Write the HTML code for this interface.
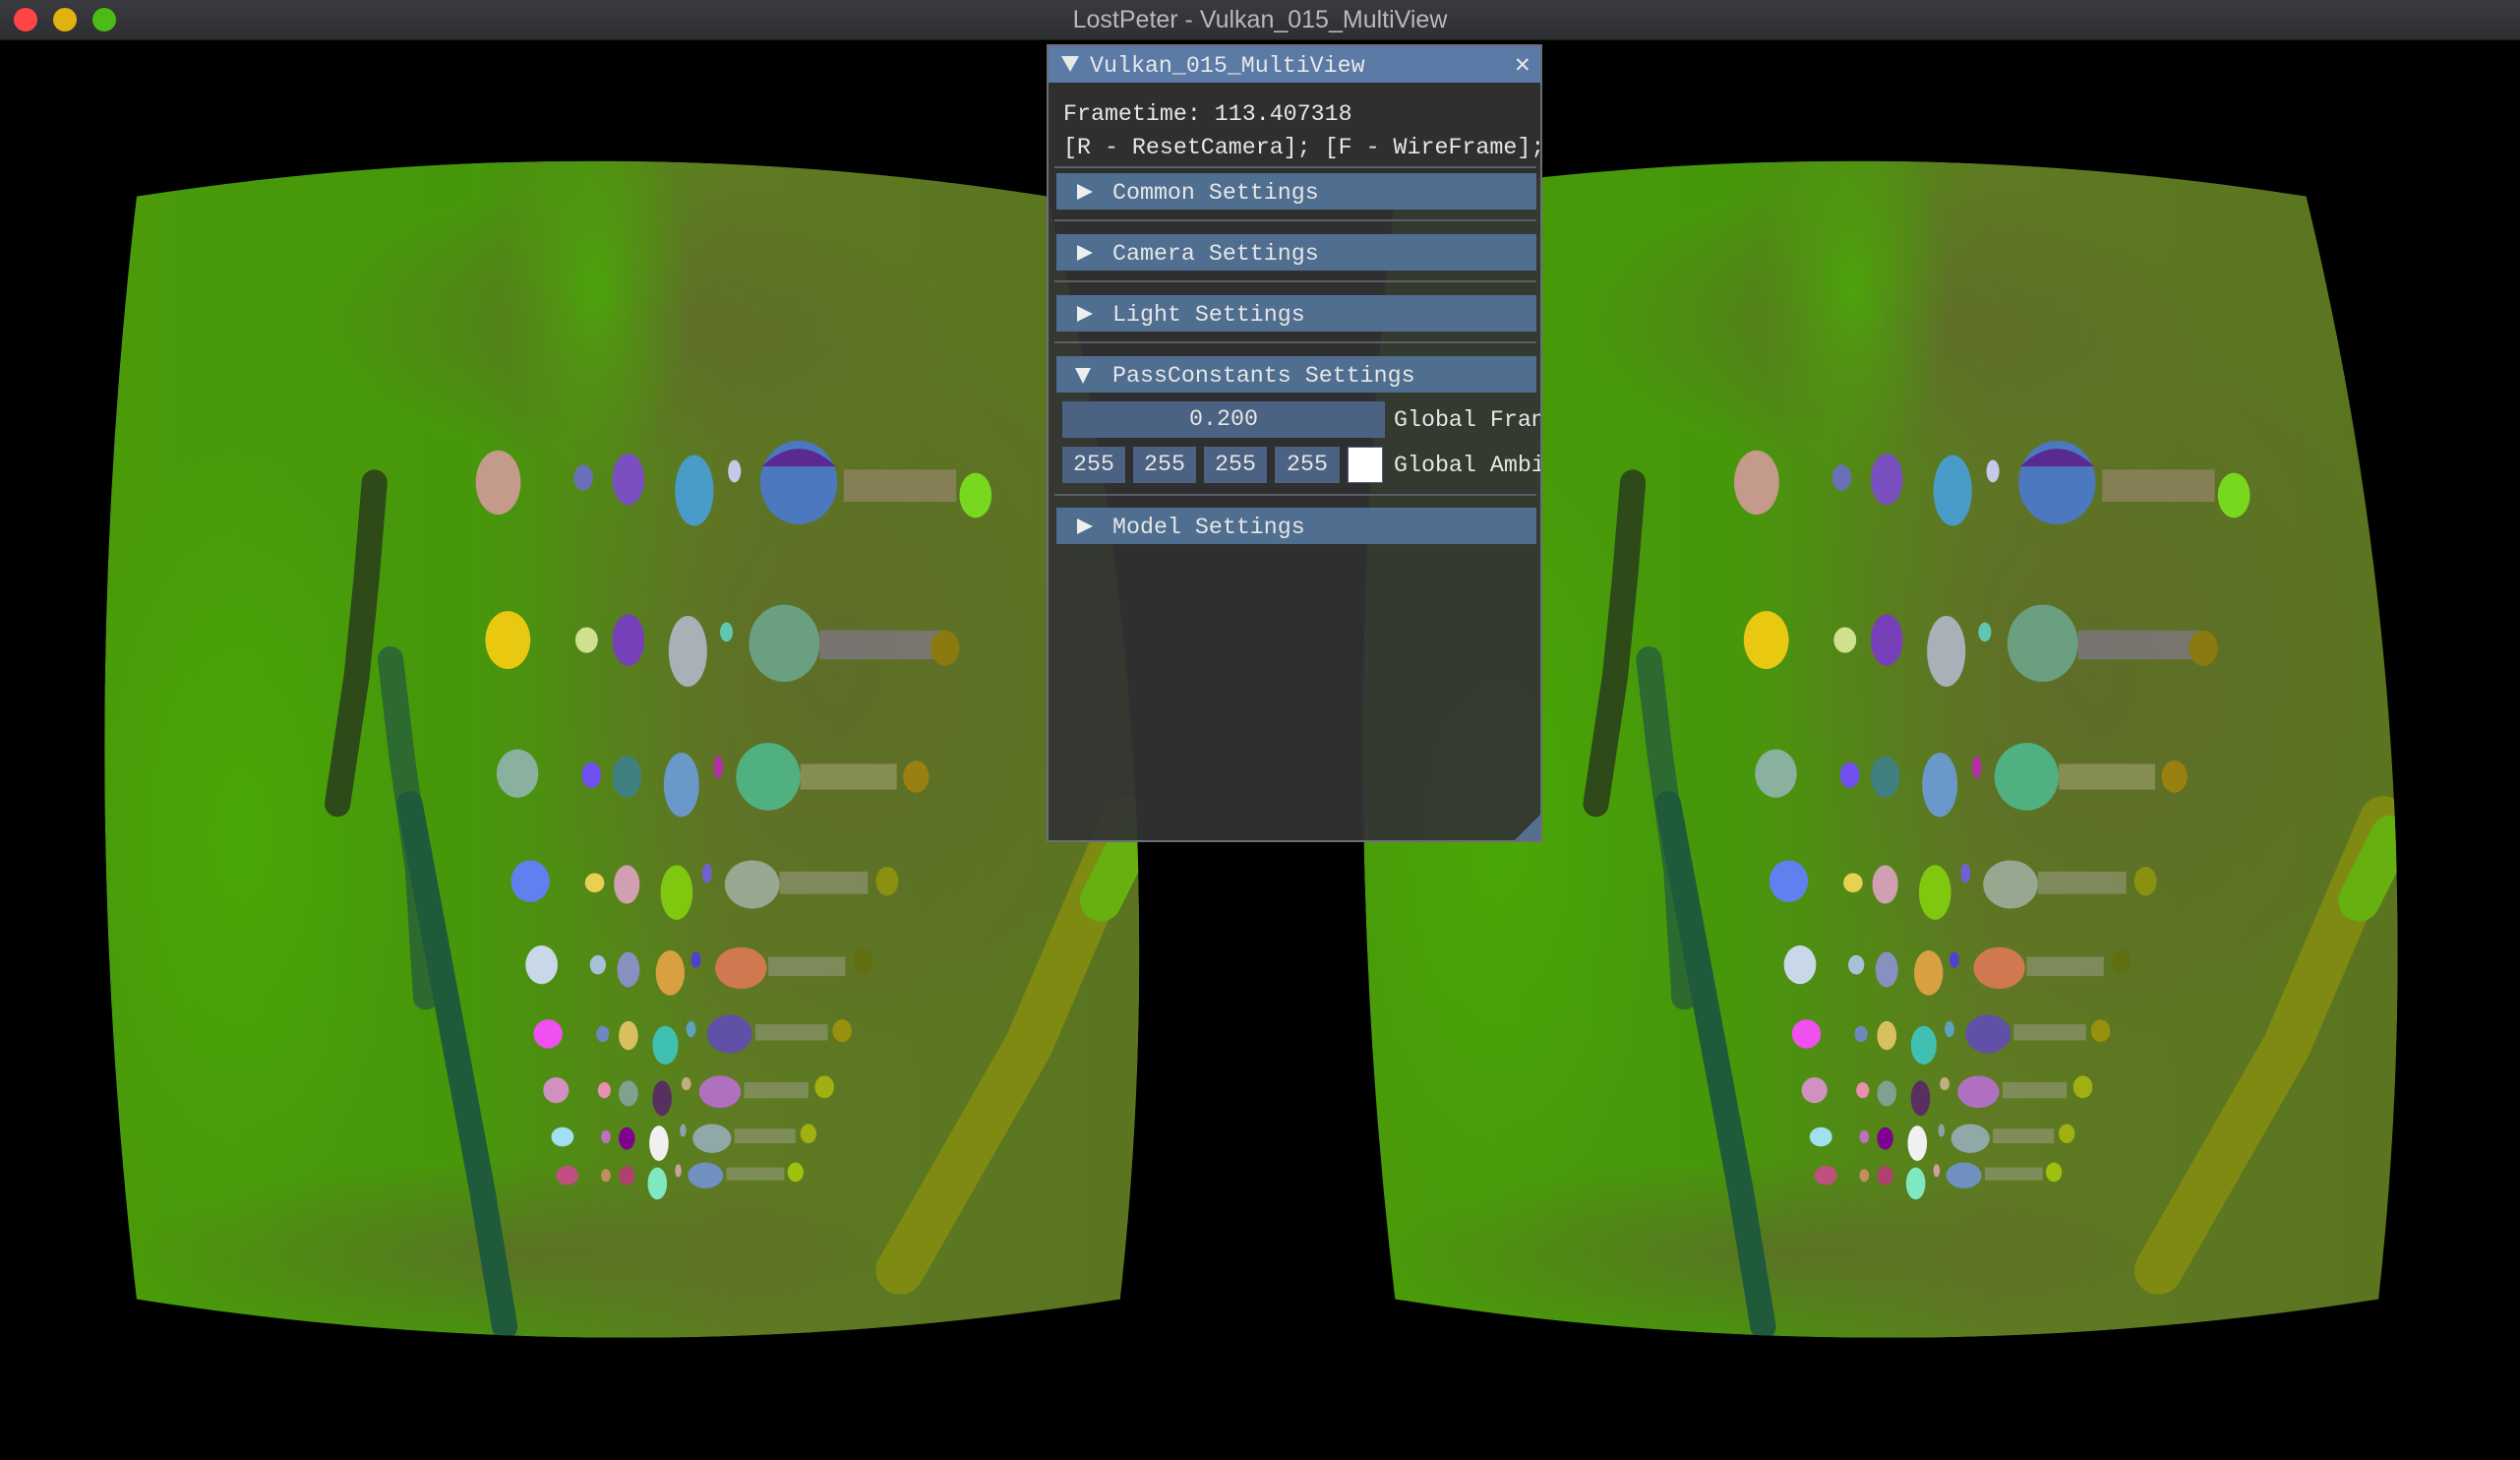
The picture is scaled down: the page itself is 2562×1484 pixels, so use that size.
<!DOCTYPE html>
<html><head><meta charset="utf-8"><style>
html,body{margin:0;padding:0;background:#000;width:2562px;height:1484px;overflow:hidden;position:relative;font-family:"Liberation Mono",monospace}
#tb{position:absolute;left:0;top:0;width:2562px;height:40px;background:linear-gradient(#3a3b3e,#2e2f32);border-bottom:1px solid #1a1a1a}
#tb .t{position:absolute;left:0;right:0;top:6px;text-align:center;color:#b9b9bb;font:25px "Liberation Sans",sans-serif}
.dot{position:absolute;top:8px;width:24px;height:24px;border-radius:50%}
#scene{position:absolute;left:0;top:41px}
#panel{position:absolute;left:1064px;top:45px;width:504px;height:811px;background:rgba(51,51,51,0.93);border:2px solid #6c6e7a;box-sizing:border-box;color:#e6e6e6;font-size:23.3px;overflow:hidden}
#ttl{position:absolute;left:0;top:0;right:0;height:37px;background:#5b7aa6}
.txt{position:absolute;white-space:pre;line-height:24px}
.hdr{position:absolute;left:8px;width:488px;height:37px;background:#4f6e90}
.sep{position:absolute;left:6px;width:490px;height:2px;background:#5c5e64}
.tri{position:absolute;width:0;height:0}
.box{position:absolute;height:37px;background:#4b6282;text-align:center;line-height:37px}
</style></head><body>
<div id="tb"><div class="dot" style="left:14px;background:#fe4447"></div><div class="dot" style="left:54px;background:#dfb20f"></div><div class="dot" style="left:94px;background:#4dbb15"></div><div class="t">LostPeter - Vulkan_015_MultiView</div></div>

<svg id="scene" width="2562" height="1443" viewBox="0 25 1568 883" preserveAspectRatio="none">
<defs>
<linearGradient id="g" x1="0" y1="0" x2="1" y2="0">
<stop offset="0" stop-color="#4a9a0a"/><stop offset="0.35" stop-color="#46980a"/><stop offset="0.6" stop-color="#5e7a22"/><stop offset="1" stop-color="#5a7420"/></linearGradient>
<radialGradient id="d" cx="0.5" cy="0.5" r="0.5"><stop offset="0" stop-color="#5f6a2a" stop-opacity="0.8"/><stop offset="1" stop-color="#5f6a2a" stop-opacity="0"/></radialGradient>
<radialGradient id="b" cx="0.5" cy="0.5" r="0.5"><stop offset="0" stop-color="#4aa808" stop-opacity="0.9"/><stop offset="1" stop-color="#4aa808" stop-opacity="0"/></radialGradient>
<clipPath id="cp"><path d="M85,122 Q370,78 652,122 Q735,465 697,808 Q390,856 85,808 Q45,465 85,122Z"/></clipPath>
<g id="v">
<g clip-path="url(#cp)">
<path d="M85,122 Q370,78 652,122 Q735,465 697,808 Q390,856 85,808 Q45,465 85,122Z" fill="url(#g)"/>
<ellipse cx="520" cy="420" rx="190" ry="260" fill="url(#d)"/>
<ellipse cx="400" cy="200" rx="200" ry="90" fill="url(#d)"/>
<ellipse cx="330" cy="780" rx="250" ry="60" fill="url(#d)"/>
<ellipse cx="150" cy="520" rx="110" ry="260" fill="url(#b)"/>
<ellipse cx="370" cy="180" rx="60" ry="120" fill="url(#b)"/>
<g stroke-linecap="round" fill="none">
<path d="M233,300 L228,360 L222,420 L210,500" stroke="#2e4a18" stroke-width="16"/>
<path d="M243,410 L250,470 L260,540 L265,620" stroke="#2c6a30" stroke-width="16"/>
<path d="M255,500 L270,580 L285,660 L300,740 L314,825" stroke="#1f5a3a" stroke-width="16"/>
<path d="M700,510 L670,580 L640,650 L600,720 L560,790" stroke="#7f8a12" stroke-width="30"/>
<path d="M705,520 L685,560" stroke="#66b010" stroke-width="26"/>
</g>
</g>
<g>
<ellipse cx="310" cy="300" rx="14" ry="20" fill="#c49a8a"/><ellipse cx="363" cy="297" rx="6" ry="8" fill="#6a70b8"/><ellipse cx="391" cy="298" rx="10" ry="16" fill="#7a50c0"/><ellipse cx="432" cy="305" rx="12" ry="22" fill="#4a9cc8"/><ellipse cx="457" cy="293" rx="4" ry="7" fill="#c8c8e8"/><ellipse cx="497" cy="300" rx="24" ry="26" fill="#4c78c0"/><path d="M474,290 Q497,268 520,290Z" fill="#5a2a90"/><rect x="525" y="292" width="70" height="20" fill="#a08878" opacity="0.6"/><ellipse cx="607" cy="308" rx="10" ry="14" fill="#78d820"/>
<ellipse cx="316" cy="398" rx="14" ry="18" fill="#e8c810"/><ellipse cx="365" cy="398" rx="7" ry="8" fill="#d0e090"/><ellipse cx="391" cy="398" rx="10" ry="16" fill="#7840b8"/><ellipse cx="428" cy="405" rx="12" ry="22" fill="#a8b0b8"/><ellipse cx="452" cy="393" rx="4" ry="6" fill="#60c8b0"/><ellipse cx="488" cy="400" rx="22" ry="24" fill="#6aa080"/><rect x="510" y="392" width="75" height="18" fill="#8a7aa0" opacity="0.6"/><ellipse cx="588" cy="403" rx="9" ry="11" fill="#8a7a10"/>
<ellipse cx="322" cy="481" rx="13" ry="15" fill="#8ab0a0"/><ellipse cx="368" cy="482" rx="6" ry="8" fill="#7050f0"/><ellipse cx="390" cy="483" rx="9" ry="13" fill="#408080"/><ellipse cx="424" cy="488" rx="11" ry="20" fill="#6a98c8"/><ellipse cx="447" cy="477" rx="3" ry="7" fill="#b030a0"/><ellipse cx="478" cy="483" rx="20" ry="21" fill="#50b080"/><rect x="498" y="475" width="60" height="16" fill="#a0a070" opacity="0.6"/><ellipse cx="570" cy="483" rx="8" ry="10" fill="#9a8010"/>
<ellipse cx="330" cy="548" rx="12" ry="13" fill="#6080f0"/><ellipse cx="370" cy="549" rx="6" ry="6" fill="#e8d050"/><ellipse cx="390" cy="550" rx="8" ry="12" fill="#d0a0b0"/><ellipse cx="421" cy="555" rx="10" ry="17" fill="#80c810"/><ellipse cx="440" cy="543" rx="3" ry="6" fill="#7060d0"/><ellipse cx="468" cy="550" rx="17" ry="15" fill="#98a890"/><rect x="485" y="542" width="55" height="14" fill="#a0a090" opacity="0.5"/><ellipse cx="552" cy="548" rx="7" ry="9" fill="#8a9010"/>
<ellipse cx="337" cy="600" rx="10" ry="12" fill="#c8d8e8"/><ellipse cx="372" cy="600" rx="5" ry="6" fill="#a8c0d8"/><ellipse cx="391" cy="603" rx="7" ry="11" fill="#8890c0"/><ellipse cx="417" cy="605" rx="9" ry="14" fill="#d8a040"/><ellipse cx="433" cy="597" rx="3" ry="5" fill="#5040d0"/><ellipse cx="461" cy="602" rx="16" ry="13" fill="#d07850"/><rect x="478" y="595" width="48" height="12" fill="#a0a090" opacity="0.5"/><ellipse cx="537" cy="598" rx="6" ry="8" fill="#607010"/>
<ellipse cx="341" cy="643" rx="9" ry="9" fill="#f050f0"/><ellipse cx="375" cy="643" rx="4" ry="5" fill="#7088c0"/><ellipse cx="391" cy="644" rx="6" ry="9" fill="#d8c060"/><ellipse cx="414" cy="650" rx="8" ry="12" fill="#40c0b0"/><ellipse cx="430" cy="640" rx="3" ry="5" fill="#60a0c0"/><ellipse cx="454" cy="643" rx="14" ry="12" fill="#6050a8"/><rect x="470" y="637" width="45" height="10" fill="#a0a090" opacity="0.5"/><ellipse cx="524" cy="641" rx="6" ry="7" fill="#9a9010"/>
<ellipse cx="346" cy="678" rx="8" ry="8" fill="#d090c0"/><ellipse cx="376" cy="678" rx="4" ry="5" fill="#e890b0"/><ellipse cx="391" cy="680" rx="6" ry="8" fill="#80a090"/><ellipse cx="412" cy="683" rx="6" ry="11" fill="#583060"/><ellipse cx="427" cy="674" rx="3" ry="4" fill="#c0b080"/><ellipse cx="448" cy="679" rx="13" ry="10" fill="#b070c0"/><rect x="463" y="673" width="40" height="10" fill="#a0a090" opacity="0.5"/><ellipse cx="513" cy="676" rx="6" ry="7" fill="#a0b010"/>
<ellipse cx="350" cy="707" rx="7" ry="6" fill="#a0e0f0"/><ellipse cx="377" cy="707" rx="3" ry="4" fill="#c070c0"/><ellipse cx="390" cy="708" rx="5" ry="7" fill="#800090"/><ellipse cx="410" cy="711" rx="6" ry="11" fill="#f0f0f0"/><ellipse cx="425" cy="703" rx="2" ry="4" fill="#90a0b0"/><ellipse cx="443" cy="708" rx="12" ry="9" fill="#90a8a8"/><rect x="457" y="702" width="38" height="9" fill="#a0a090" opacity="0.5"/><ellipse cx="503" cy="705" rx="5" ry="6" fill="#a0b010"/>
<ellipse cx="353" cy="731" rx="7" ry="6" fill="#c05080"/><ellipse cx="377" cy="731" rx="3" ry="4" fill="#c09060"/><ellipse cx="390" cy="731" rx="5" ry="6" fill="#b04070"/><ellipse cx="409" cy="736" rx="6" ry="10" fill="#80e8c0"/><ellipse cx="422" cy="728" rx="2" ry="4" fill="#d0a0a0"/><ellipse cx="439" cy="731" rx="11" ry="8" fill="#7090c0"/><rect x="452" y="726" width="36" height="8" fill="#a0a090" opacity="0.5"/><ellipse cx="495" cy="729" rx="5" ry="6" fill="#a0c010"/>
</g>
</g>
</defs>
<use href="#v"/>
<use href="#v" transform="translate(783,0)"/>
</svg>

<div id="panel">
<div id="ttl"></div>
<div class="tri" style="left:13px;top:10px;border-left:9px solid transparent;border-right:9px solid transparent;border-top:16px solid #e8e8e8"></div>
<div class="txt" style="left:42px;top:8px;color:#e8e8e8">Vulkan_015_MultiView</div>
<div class="txt" style="left:474px;top:7px;font-size:26px">✕</div>
<div class="txt" style="left:15px;top:57px">Frametime: 113.407318</div>
<div class="txt" style="left:15px;top:91px">[R - ResetCamera]; [F - WireFrame];</div>
<div class="sep" style="top:122px"></div>
<div class="hdr" style="top:129px"></div><div class="tri" style="left:29px;top:140px;border-top:8px solid transparent;border-bottom:8px solid transparent;border-left:16px solid #eee"></div><div class="txt" style="left:65px;top:137px">Common Settings</div>
<div class="sep" style="top:176px"></div>
<div class="hdr" style="top:191px"></div><div class="tri" style="left:29px;top:202px;border-top:8px solid transparent;border-bottom:8px solid transparent;border-left:16px solid #eee"></div><div class="txt" style="left:65px;top:199px">Camera Settings</div>
<div class="sep" style="top:238px"></div>
<div class="hdr" style="top:253px"></div><div class="tri" style="left:29px;top:264px;border-top:8px solid transparent;border-bottom:8px solid transparent;border-left:16px solid #eee"></div><div class="txt" style="left:65px;top:261px">Light Settings</div>
<div class="sep" style="top:300px"></div>
<div class="hdr" style="top:315px"></div><div class="tri" style="left:27px;top:327px;border-left:8px solid transparent;border-right:8px solid transparent;border-top:16px solid #eee"></div><div class="txt" style="left:65px;top:323px">PassConstants Settings</div>
<div class="box" style="left:14px;top:361px;width:328px">0.200</div>
<div class="txt" style="left:351px;top:368px">Global Fran</div>
<div class="box" style="left:14px;top:407px;width:64px">255</div>
<div class="box" style="left:86px;top:407px;width:64px">255</div>
<div class="box" style="left:158px;top:407px;width:64px">255</div>
<div class="box" style="left:230px;top:407px;width:66px">255</div>
<div style="position:absolute;left:304px;top:407px;width:34px;height:35px;background:#fff;border:1px solid #4b6282"></div>
<div class="txt" style="left:351px;top:414px">Global Ambi</div>
<div class="sep" style="top:455px"></div>
<div class="hdr" style="top:469px"></div><div class="tri" style="left:29px;top:480px;border-top:8px solid transparent;border-bottom:8px solid transparent;border-left:16px solid #eee"></div><div class="txt" style="left:65px;top:477px">Model Settings</div>
<div class="tri" style="right:0;bottom:0;border-left:26px solid transparent;border-bottom:26px solid #55708f"></div>
</div>
</body></html>
